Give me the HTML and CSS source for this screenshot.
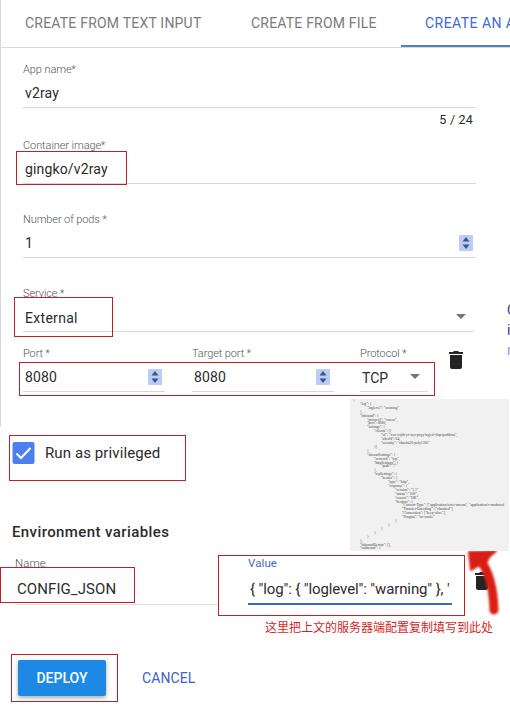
FILE: index.html
```html
<!DOCTYPE html>
<html lang="en">
<head>
<meta charset="utf-8">
<title>Create an app</title>
<link rel="stylesheet" href="styles.css">
</head>
<body>
<main class="page">
  <section class="panel">
    <nav class="tabs">
      <span class="tab tab-text">CREATE FROM TEXT INPUT</span>
      <span class="tab tab-file">CREATE FROM FILE</span>
      <span class="tab tab-app active">CREATE AN A</span>
    </nav>
    <div class="columns">
      <form class="form">
        <div class="field name">
          <label>App name<i>*</i></label>
          <div class="value"><span>v2ray</span></div>
        </div>
        <div class="counter">5 / 24</div>
        <div class="field image">
          <label>Container image<i>*</i></label>
          <div class="value"><span>gingko/v2ray</span></div>
        </div>
        <div class="field pods">
          <label>Number of pods <i>*</i></label>
          <div class="value"><span>1</span><svg class="spin" viewBox="0 0 14 16"><path d="M3.500 6.500 7 2l3.500 4.500zM3.500 9.500h7L7 14z"/></svg></div>
        </div>
        <div class="field service">
          <label>Service <i>*</i></label>
          <div class="value"><span>External</span><b class="caret"></b></div>
        </div>
        <div class="ports">
          <div class="field port">
            <label>Port <i>*</i></label>
            <div class="value"><span>8080</span><svg class="spin" viewBox="0 0 14 16"><path d="M3.500 6.500 7 2l3.500 4.500zM3.500 9.500h7L7 14z"/></svg></div>
          </div>
          <div class="field target">
            <label>Target port <i>*</i></label>
            <div class="value"><span>8080</span><svg class="spin" viewBox="0 0 14 16"><path d="M3.500 6.500 7 2l3.500 4.500zM3.500 9.500h7L7 14z"/></svg></div>
          </div>
          <div class="field protocol">
            <label>Protocol <i>*</i></label>
            <div class="value"><span>TCP</span><b class="caret"></b></div>
          </div>
          <svg class="trash" viewBox="0 0 14 18"><path d="M1 4h12v12q0 2-2 2H3q-2 0-2-2zM0 1h4l1-1h4l1 1h4v2H0z"/></svg>
        </div>
      </form>
      <aside class="hints">
        <p class="hint-service">C<br>i<br><em>n</em></p>
      </aside>
    </div>
  </section>

  <div class="privileged">
    <svg class="check" viewBox="0 0 22 22"><rect width="22" height="22" rx="2"/><path d="M4 11.500 8.500 16 18 6"/></svg>
    <span>Run as privileged</span>
  </div>

  <h2>Environment variables</h2>
  <div class="env">
    <div class="env-field env-name">
      <label>Name</label>
      <div class="value"><span>CONFIG_JSON</span></div>
    </div>
    <div class="env-field env-value">
      <label>Value</label>
      <div class="value"><span>{ "log": { "</span><b class="cursor"></b><span>loglevel": "warning" }, '</span></div>
    </div>
    <svg class="trash" viewBox="0 0 14 18"><path d="M1 4h12v12q0 2-2 2H3q-2 0-2-2zM0 1h4l1-1h4l1 1h4v2H0z"/></svg>
  </div>
  <p class="note" lang="zh-CN">这里把上文的服务器端配置复制填写到此处</p>
  <div class="actions">
    <button class="deploy">DEPLOY</button>
    <button class="cancel">CANCEL</button>
  </div>

  <svg class="arrow" viewBox="0 0 50 80"><path class="shaft" d="M20 13Q33 29 34 63"/><path d="M9 5 36 4 29 10 26 16 18 19 11 23z"/></svg>
  <pre class="code">{
	"log": {
		"loglevel": "warning"
	},
	"inbound": {
		"protocol": "vmess",
		"port": 8080,
		"settings": {
			"clients": [{
				"id": "xxx-xxjfh-yt-xyz-pxyy-hyjetf-fhqetyaddrira",
				"alterId": 64,
				"security": "chacha20-poly1305"
			}]
		},
		"streamSettings": {
			"network": "tcp",
			"httpSettings": {
				"path": "/"
			},
			"tcpSettings": {
				"header": {
					"type": "http",
					"response": {
						"version": "1.1",
						"status": "200",
						"reason": "OK",
						"headers": {
							"Content-Type": ["application/octet-stream", "application/x-msdownl
							"Transfer-Encoding": ["chunked"],
							"Connection": ["keep-alive"],
							"Pragma": "no-cache"
						}
					}
				}
			}
		}
	},
	"inboundDetour": [],
	"outbound": {</pre>
  <div class="mark mark-image"></div>
  <div class="mark mark-service"></div>
  <div class="mark mark-ports"></div>
  <div class="mark mark-privileged"></div>
  <div class="mark mark-env-name"></div>
  <div class="mark mark-env-value"></div>
  <div class="mark mark-deploy"></div>
</main>
</body>
</html>
```
FILE: styles.css
```css
* { box-sizing: border-box; }
body { margin: 0; background: #fff; color: #2b2b2b; font: 15px/18px Roboto, "Liberation Sans", sans-serif; }
p, h2, pre { margin: 0; }
.page { position: relative; width: 510px; height: 717px; overflow: hidden; }
.panel { height: 427px; border-left: 1px solid #d9d9d9; }
.tabs { display: flex; height: 48px; border-bottom: 1px solid #d8d8d8; white-space: nowrap; font-size: 14px; line-height: 47px; color: #7b7b7b; }
.tab { flex: none; padding-left: 24px; height: 47px; }
.tab-text { width: 226px; letter-spacing: .21px; }
.tab-file { width: 174px; letter-spacing: .2px; }
.tab-app { width: 140px; letter-spacing: .45px; }
.active { color: #3b69dc; border-bottom: 2px solid #4d86c8; }
.columns { display: flex; }
.form { width: 506px; flex: none; padding: 14px 0 0 22px; }
.field { width: 453px; height: 46px; border-bottom: 1px solid #d8d8d8; }
.field label { display: block; height: 15px; font-size: 11px; line-height: 15px; font-weight: 300; color: #555; letter-spacing: -.08px; }
.pods label, .service label, .ports label { letter-spacing: -.1px; }
i { font-style: normal; font-size: 10px; }
.value { display: flex; justify-content: space-between; height: 30px; padding: 0 3px 0 2px; font-size: 14px; line-height: 33px; letter-spacing: .15px; white-space: nowrap; }
.counter { width: 450px; height: 30px; text-align: right; font-size: 12.5px; line-height: 24px; letter-spacing: .2px; }
.pods { margin-top: 28px; }
.service { margin-top: 28px; width: 451px; }
.service .value { line-height: 34px; letter-spacing: .3px; }
.ports { display: flex; margin-top: 14px; }
.port { width: 142px; }
.target { width: 142px; margin-left: 27px; }
.target .value { padding-right: 4px; }
.protocol { width: 68px; margin-left: 26px; }
.protocol .value { line-height: 34px; letter-spacing: 0; }
.spin { width: 14px; height: 16px; margin: 8px 0 0; background: #b9cdf8; fill: #405484; border-radius: 1px; }
.caret { width: 0; height: 0; border: 5px solid transparent; border-top: 5px solid #757575; margin: 13px 5px 0; }
.trash { width: 14px; height: 18px; fill: #242424; flex: none; }
.ports .trash { margin: 5px 0 0 21px; }
.hints { width: 60px; flex: none; white-space: nowrap; font-size: 14px; line-height: 20px; }
.hint-service { padding-top: 252px; color: #46366b; }
.hint-service em { font-style: normal; color: #8f9fc9; }
.privileged { display: flex; gap: 10px; margin: 15px 0 0 12px; height: 22px; line-height: 23px; letter-spacing: .1px; }
.check { width: 23px; height: 22px; fill: #4c80ee; }
.check path { fill: none; stroke: #fff; stroke-width: 2; }
h2 { margin: 59px 0 0 12px; height: 18px; font-size: 15px; line-height: 18px; font-weight: 500; letter-spacing: .4px; }
.env { display: flex; padding-left: 15px; margin-top: 14px; height: 51px; }
.env-field label { display: block; height: 17px; font-size: 11.5px; line-height: 17px; letter-spacing: .1px; color: #858585; }
.env-field .value { font-size: 15px; }
.env-name { width: 204px; height: 50px; border-bottom: 1px solid #e1e1e1; }
.env-name label { font-weight: 300; color: #555; }
.env-name .value { letter-spacing: .08px; line-height: 35px; }
.env-value { width: 204px; margin-left: 29px; height: 50px; border-bottom: 2px solid #3c66bb; }
.env-value label { color: #3f68c8; }
.env-value .value { justify-content: flex-start; line-height: 34px; white-space: pre; letter-spacing: -.12px; }
.cursor { width: 1px; height: 17px; background: #222; margin: 8px 0 0; }
.env .trash { margin: 17px 0 0 23px; }
.note { margin: 12px 0 0 265px; font: 12px/18px "Noto Sans CJK SC", sans-serif; color: #d51f1f; white-space: nowrap; }
.actions { display: flex; margin: 24px 0 0 18px; }
button { height: 36px; padding: 0; border: 0; background: none; font: 14px/36px Roboto, sans-serif; white-space: nowrap; }
.deploy { width: 88px; border-radius: 2px; background: #1e88e5; color: #fff; font-weight: 500; box-shadow: 0 2px 4px #0005; }
.cancel { margin-left: 36px; color: #3d60ce; letter-spacing: .1px; }
.mark { position: absolute; border: 1px solid #bd2026; }
.mark-image { left: 16px; top: 151px; width: 111px; height: 34px; }
.mark-service { left: 14px; top: 297px; width: 99px; height: 40px; }
.mark-ports { left: 19px; top: 362px; width: 416px; height: 34px; }
.mark-privileged { left: 9px; top: 435px; width: 177px; height: 46px; }
.mark-env-name { left: 0; top: 567px; width: 135px; height: 36px; }
.mark-env-value { left: 218px; top: 555px; width: 247px; height: 61px; }
.mark-deploy { left: 11px; top: 654px; width: 107px; height: 48px; }
.arrow { position: absolute; left: 460px; top: 547px; width: 50px; height: 80px; fill: #d91e14; stroke: #d91e14; stroke-width: 2; stroke-linejoin: round; filter: blur(.8px); }
.arrow .shaft { fill: none; stroke-width: 9; stroke-linecap: round; }
.code { position: absolute; left: 350px; top: 399px; width: 159px; height: 152px; padding: 0 0 0 3px; overflow: hidden; background: #f1f1f1; color: #444; font: 3.7px/3.9px "Liberation Serif", serif; tab-size: 7px; }
```
